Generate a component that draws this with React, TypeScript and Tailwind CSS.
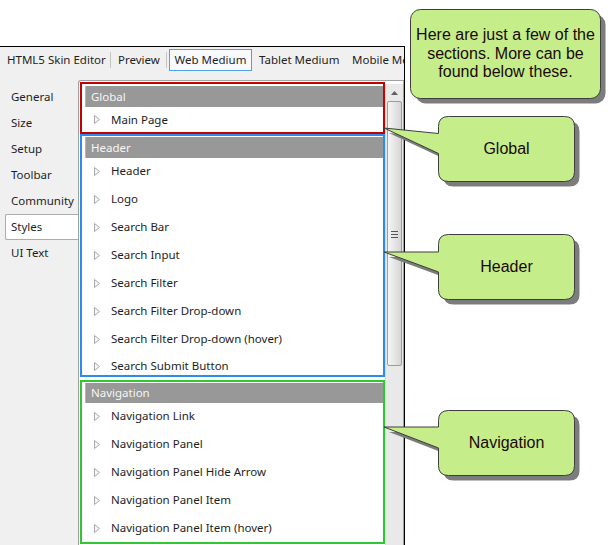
import React from "react";

const ui = { fontFamily: '"Noto Sans", "Open Sans", sans-serif' };
const callFont = { fontFamily: '"Liberation Sans", Arial, sans-serif' };

const Tri = () => (
  <svg width="6" height="9" viewBox="0 0 6 9" className="shrink-0">
    <path d="M0.5 0.5 L5.5 4.5 L0.5 8.5 Z" fill="#f6f6f6" stroke="#a9a9a9" strokeWidth="1" />
  </svg>
);

const Row = ({ label }: { label: string }) => (
  <div className="flex items-center h-[28px] pb-[2px] pl-[12px] shrink-0">
    <Tri />
    <span className="ml-[11px] whitespace-nowrap">{label}</span>
  </div>
);

const Bar = ({ label, h }: { label: string; h: string }) => (
  <div className={`ml-[3px] ${h} bg-[#989898] text-[#f6f6f6] flex items-center pl-[5px] shrink-0 border-l border-[#b4b4b4]`}>
    {label}
  </div>
);

const headerItems = [
  "Header",
  "Logo",
  "Search Bar",
  "Search Input",
  "Search Filter",
  "Search Filter Drop-down",
  "Search Filter Drop-down (hover)",
];

const navItems = [
  "Navigation Link",
  "Navigation Panel",
  "Navigation Panel Hide Arrow",
  "Navigation Panel Item",
  "Navigation Panel Item (hover)",
];

const sideItems = ["General", "Size", "Setup", "Toolbar", "Community", "Styles", "UI Text"];

export default function App() {
  return (
    <div className="relative w-[615px] h-[545px] bg-white overflow-hidden text-[11.5px] text-[#1e1e1e]" style={ui}>
      {/* window */}
      <div className="mt-[46px] w-[405px] h-[499px] border-t border-r border-black bg-[#f0f0f0] flex flex-col overflow-hidden">
        {/* tab bar */}
        <div className="h-[26px] flex items-center shrink-0 whitespace-nowrap overflow-hidden">
          <div className="w-[110px] pl-[7px] shrink-0">HTML5 Skin Editor</div>
          <div className="w-px h-[16px] bg-[#c4c4c4] shrink-0" />
          <div className="w-[55px] pl-[7px] shrink-0">Preview</div>
          <div className="w-px h-[16px] bg-[#c4c4c4] shrink-0" />
          <div className="ml-[2px] w-[83px] h-[22px] border border-[#4fa2ea] bg-[#f7f9fc] flex items-center justify-center shrink-0">
            Web Medium
          </div>
          <div className="w-[93px] pl-[7px] shrink-0">Tablet Medium</div>
          <div className="pl-[7px] shrink-0">Mobile Medium</div>
        </div>

        {/* body */}
        <div className="mt-[7px] flex flex-1 min-h-0">
          {/* sidebar */}
          <div className="w-[78px] pt-[4px] shrink-0">
            {sideItems.map((s) =>
              s === "Styles" ? (
                <div
                  key={s}
                  className="ml-[5px] h-[26px] bg-white border-l border-t border-b border-[#acacac] rounded-l-[2px] flex items-center pl-[5px]"
                >
                  {s}
                </div>
              ) : (
                <div key={s} className="h-[26px] flex items-center pl-[11px]">
                  {s}
                </div>
              )
            )}
          </div>

          {/* panel */}
          <div className="flex-1 flex bg-white border-l border-t border-[#a0a0a0] rounded-tl-[3px] overflow-hidden">
            {/* list */}
            <div className="w-[306px] pl-[1px] shrink-0 flex flex-col">
              {/* Global */}
              <div className="mt-[1px] w-[305px] border-2 border-[#c40000] pt-[2px] flex flex-col">
                <Bar label="Global" h="h-[21px]" />
                <div className="flex items-center h-[25px] pl-[12px]">
                  <Tri />
                  <span className="ml-[11px]">Main Page</span>
                </div>
              </div>
              {/* Header */}
              <div className="w-[305px] h-[243px] border-2 border-[#2a8cf0] pt-[1px] flex flex-col overflow-hidden">
                <Bar label="Header" h="h-[21px]" />
                {headerItems.map((i) => (
                  <Row key={i} label={i} />
                ))}
                <div className="flex items-start h-[21px] pt-[8px] pl-[12px] shrink-0 overflow-hidden">
                  <Tri />
                  <span className="ml-[11px] leading-[10px] -mt-[1px]">Search Submit Button</span>
                </div>
              </div>
              {/* Navigation */}
              <div className="mt-[3px] w-[305px] h-[164px] border-2 border-[#30c830] pt-[1px] flex flex-col overflow-hidden">
                <Bar label="Navigation" h="h-[20px]" />
                {navItems.map((i) => (
                  <Row key={i} label={i} />
                ))}
              </div>
            </div>

            {/* scrollbar */}
            <div className="w-[18px] shrink-0 mt-[3px] bg-[#e9e9e9] border-l border-[#dadada] flex flex-col items-center">
              <div className="h-[17px] flex items-center justify-center">
                <svg width="7" height="4" viewBox="0 0 7 4">
                  <path d="M0 4 L3.5 0 L7 4 Z" fill="#606060" />
                </svg>
              </div>
              <div className="w-[15px] h-[265px] rounded-[2px] border border-[#9c9c9c] bg-gradient-to-r from-[#f6f6f6] to-[#d6d6d6] flex items-center justify-center">
                <div className="flex flex-col gap-[2px] pt-[2px]">
                  <div className="w-[7px] h-px bg-[#555]" />
                  <div className="w-[7px] h-px bg-[#555]" />
                  <div className="w-[7px] h-px bg-[#555]" />
                </div>
              </div>
            </div>
            <div className="w-px bg-[#a0a0a0] shrink-0" />
          </div>
        </div>
      </div>

      {/* callouts */}
      <svg className="absolute left-0 top-0 pointer-events-none" width="615" height="545" viewBox="0 0 615 545">
        <g transform="translate(5,5)" fill="#7c7c7c">
          <rect x="410.5" y="9.5" width="190" height="89" rx="10" />
          <path d="M448.5 116.5 H564.5 Q574.5 116.5 574.5 126.5 V171.5 Q574.5 181.5 564.5 181.5 H448.5 Q438.5 181.5 438.5 171.5 V153.5 L384 128 L438.5 133.5 V126.5 Q438.5 116.5 448.5 116.5 Z" />
          <path d="M448.5 234.5 H564.5 Q574.5 234.5 574.5 244.5 V289.5 Q574.5 299.5 564.5 299.5 H448.5 Q438.5 299.5 438.5 289.5 V272 L384 252 L438.5 252 V244.5 Q438.5 234.5 448.5 234.5 Z" />
          <path d="M448.5 410.5 H564.5 Q574.5 410.5 574.5 420.5 V465.5 Q574.5 475.5 564.5 475.5 H448.5 Q438.5 475.5 438.5 465.5 V448 L384 427 L438.5 427 V420.5 Q438.5 410.5 448.5 410.5 Z" />
        </g>
        <g fill="#c5ee8a" stroke="#3e3e3e" strokeWidth="1">
          <rect x="410.5" y="9.5" width="190" height="89" rx="10" />
          <path d="M448.5 116.5 H564.5 Q574.5 116.5 574.5 126.5 V171.5 Q574.5 181.5 564.5 181.5 H448.5 Q438.5 181.5 438.5 171.5 V153.5 L384 128 L438.5 133.5 V126.5 Q438.5 116.5 448.5 116.5 Z" />
          <path d="M448.5 234.5 H564.5 Q574.5 234.5 574.5 244.5 V289.5 Q574.5 299.5 564.5 299.5 H448.5 Q438.5 299.5 438.5 289.5 V272 L384 252 L438.5 252 V244.5 Q438.5 234.5 448.5 234.5 Z" />
          <path d="M448.5 410.5 H564.5 Q574.5 410.5 574.5 420.5 V465.5 Q574.5 475.5 564.5 475.5 H448.5 Q438.5 475.5 438.5 465.5 V448 L384 427 L438.5 427 V420.5 Q438.5 410.5 448.5 410.5 Z" />
        </g>
      </svg>

      <div
        className="absolute left-[410px] top-[9px] w-[191px] h-[90px] flex items-center justify-center text-center text-[16px] leading-[18.5px] text-[#1c0808]"
        style={callFont}
      >
        <div>
          Here are just a few of the
          <br />
          sections. More can be
          <br />
          found below these.
        </div>
      </div>
      <div className="absolute left-[438px] top-[116px] w-[137px] h-[66px] flex items-center justify-center text-[16px] text-[#1c0808]" style={callFont}>
        Global
      </div>
      <div className="absolute left-[438px] top-[234px] w-[137px] h-[66px] flex items-center justify-center text-[16px] text-[#1c0808]" style={callFont}>
        Header
      </div>
      <div className="absolute left-[438px] top-[410px] w-[137px] h-[66px] flex items-center justify-center text-[16px] text-[#1c0808]" style={callFont}>
        Navigation
      </div>
    </div>
  );
}
